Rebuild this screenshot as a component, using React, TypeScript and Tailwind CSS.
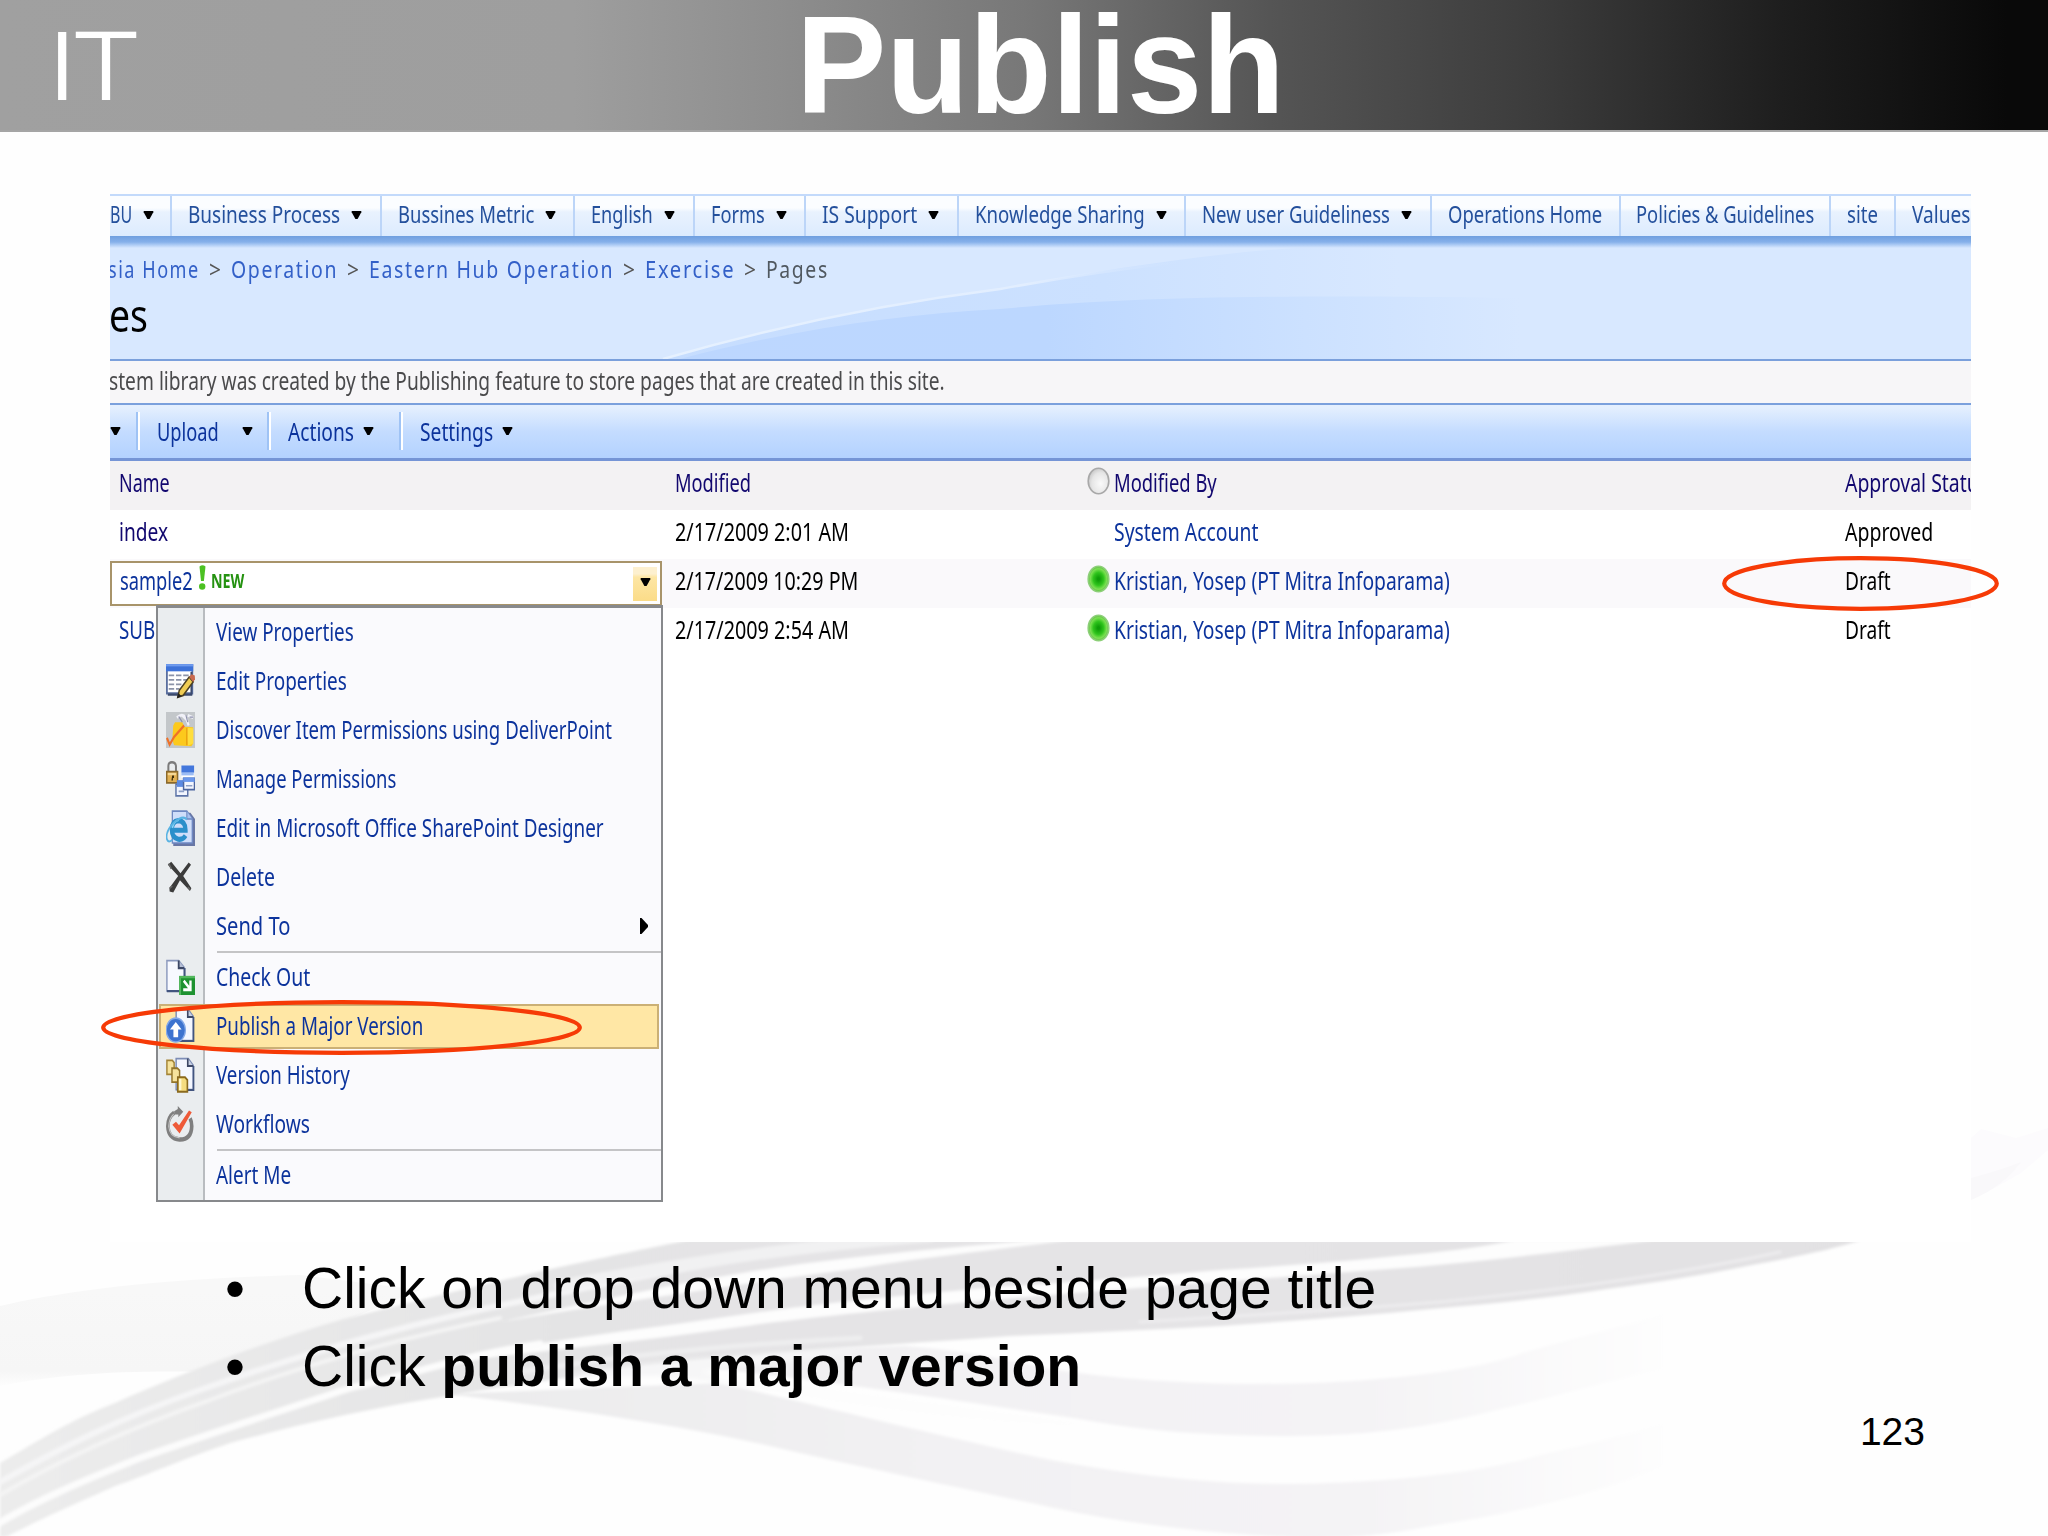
import React, { useLayoutEffect, useRef, useState } from 'react';

interface FitProps {
  w: number;
  className?: string;
  children: React.ReactNode;
}

// Condenses a line of text horizontally until it is exactly `w` pixels wide
const Fit: React.FC<FitProps> = ({ w, className = '', children }) => {
  const ref = useRef<HTMLSpanElement>(null);
  const [scale, setScale] = useState(1);

  useLayoutEffect(() => {
    if (ref.current) setScale(w / ref.current.offsetWidth);
  }, [w]);

  return (
    <span className={`block shrink-0 ${className}`} style={{ width: w }}>
      <span
        ref={ref}
        className="inline-block origin-left whitespace-nowrap"
        style={{ transform: `scaleX(${scale})` }}
      >
        {children}
      </span>
    </span>
  );
};

const Arrow = ({ className = '' }: { className?: string }) => (
  <svg className={`h-[8px] w-[11px] shrink-0 ${className}`} viewBox="0 0 11 8" preserveAspectRatio="none">
    <path d="M.7 0h9.600v1.300L6.600 8H4.400L.7 1.300z" fill="#000" />
  </svg>
);

const TABS = [
  { label: 'BU', w: 22, box: 'w-[62px] pl-0', arrow: true },
  { label: 'Business Process', w: 152, box: 'w-[210px] pl-[16px]', arrow: true },
  { label: 'Bussines Metric', w: 136, box: 'w-[193px] pl-[16px]', arrow: true },
  { label: 'English', w: 62, box: 'w-[120px] pl-[16px]', arrow: true },
  { label: 'Forms', w: 54, box: 'w-[111px] pl-[16px]', arrow: true },
  { label: 'IS Support', w: 95, box: 'w-[153px] pl-[16px]', arrow: true },
  { label: 'Knowledge Sharing', w: 170, box: 'w-[227px] pl-[16px]', arrow: true },
  { label: 'New user Guideliness', w: 188, box: 'w-[246px] pl-[16px]', arrow: true },
  { label: 'Operations Home', w: 154, box: 'w-[189px] pl-[16px]', arrow: false },
  { label: 'Policies & Guidelines', w: 178, box: 'w-[210px] pl-[15px]', arrow: false },
  { label: 'site', w: 31, box: 'w-[65px] pl-[16px]', arrow: false },
  { label: 'Values', w: 58, box: 'w-[80px] pl-[16px]', arrow: false },
];

const CRUMBS = [
  { label: 'sia Home', w: 92 },
  { label: 'Operation', w: 107 },
  { label: 'Eastern Hub Operation', w: 245 },
  { label: 'Exercise', w: 90 },
];

const TabBar = () => (
  <div className="flex h-[42px] border-t-2 border-[#c3dafb] text-[24px] leading-[36px] text-[#24509c]">
    {TABS.map((tab) => (
      <div
        key={tab.label}
        className={`flex shrink-0 border-r-2 border-[#bcd5f8] bg-linear-to-b from-[#fbfdff] from-30% via-[#e9f2fe] via-40% to-[#dcebfe] ${tab.box}`}
      >
        <Fit w={tab.w}>{tab.label}</Fit>
        {tab.arrow && <Arrow className="mt-[15px] ml-[11px]" />}
      </div>
    ))}
  </div>
);

const TitleArea = () => (
  <div className="relative h-[123px] overflow-hidden bg-[#d8e8ff]">
    <svg className="absolute inset-0 h-full w-full" viewBox="110 236 1861 123" preserveAspectRatio="none">
      <defs>
        <linearGradient id="wave" gradientUnits="userSpaceOnUse" x1="660" y1="0" x2="1520" y2="0">
          <stop offset="0" stopColor="#bdd7ff" />
          <stop offset="0.45" stopColor="#bcd7ff" />
          <stop offset="0.75" stopColor="#cce1ff" />
          <stop offset="1" stopColor="#d8e8ff" />
        </linearGradient>
        <linearGradient id="crest" gradientUnits="userSpaceOnUse" x1="660" y1="0" x2="1400" y2="0">
          <stop offset="0" stopColor="#c6ddff" />
          <stop offset="0.6" stopColor="#cce1ff" />
          <stop offset="1" stopColor="#d8e8ff" />
        </linearGradient>
        <linearGradient id="edge" gradientUnits="userSpaceOnUse" x1="660" y1="0" x2="1180" y2="0">
          <stop offset="0" stopColor="#e6f1ff" />
          <stop offset="0.7" stopColor="#e2eeff" />
          <stop offset="1" stopColor="#d8e8ff" stopOpacity="0" />
        </linearGradient>
      </defs>
      <path d="M663 359C780 325 890 303 1000 289C1110 269 1210 252 1330 246H1520V359z" fill="url(#crest)" />
      <path d="M680 359C790 330 900 314 1000 309C1120 298 1250 294 1520 298V359z" fill="url(#wave)" />
      <path d="M663 359C780 325 890 303 1000 289C1060 278 1120 269 1180 262" fill="none" stroke="url(#edge)" strokeWidth="2.500" />
    </svg>
    <div className="relative h-[12px] bg-linear-to-b from-[#6f9fdf] via-[#86b0ea] to-[#d8e8ff]" />
    <div className="relative flex h-[44px] gap-[8.500px] text-[24px] leading-[42px] tracking-[2px] text-[#3360c8]">
      {CRUMBS.map((crumb, i) => (
        <React.Fragment key={crumb.label}>
          <Fit w={crumb.w} className={i === 0 ? '-ml-[2px]' : ''}>{crumb.label}</Fit>
          <Fit w={14} className="text-[#555]">&gt;</Fit>
        </React.Fragment>
      ))}
      <Fit w={63} className="text-[#505860]">Pages</Fit>
    </div>
    <div className="relative text-[45px] leading-[46px] text-black">
      <Fit w={39} className="-ml-[1px]">es</Fit>
    </div>
  </div>
);

const ToolDivider = ({ className }: { className: string }) => (
  <div className={`mt-[7px] h-[38px] w-[4px] shrink-0 border-r-2 border-l-2 border-r-white border-l-[#9fc3f5] ${className}`} />
);

const Toolbar = () => (
  <div className="flex h-[56px] border-b-[3px] border-[#7595d6] bg-linear-to-b from-[#e4effe] from-5% via-[#c4dcff] via-50% to-[#b3d2ff] text-[25px] leading-[53px] text-[#0c339c] shadow-[0_2px_2px_#c8ccd4]">
    <Arrow className="mt-[22px]" />
    <ToolDivider className="ml-[15px]" />
    <Fit w={62} className="ml-[17px]">Upload</Fit>
    <Arrow className="mt-[22px] ml-[23px]" />
    <ToolDivider className="ml-[14px]" />
    <Fit w={66} className="ml-[17px]">Actions</Fit>
    <Arrow className="mt-[22px] ml-[9px]" />
    <ToolDivider className="ml-[25px]" />
    <Fit w={73} className="ml-[17px]">Settings</Fit>
    <Arrow className="mt-[22px] ml-[9px]" />
  </div>
);

const Presence = ({ online }: { online: boolean }) => (
  <svg className="mt-[6px] h-[28px] w-[23px]" viewBox="0 0 23 28">
    <defs>
      <radialGradient id="online" cx="0.5" cy="0.5" r="0.5">
        <stop offset="0.1" stopColor="#0f9d08" />
        <stop offset="0.5" stopColor="#2fc41c" />
        <stop offset="0.8" stopColor="#7be052" />
        <stop offset="1" stopColor="#62b84a" />
      </radialGradient>
      <radialGradient id="offline" cx="0.6" cy="0.6" r="0.6">
        <stop offset="0" stopColor="#fafafa" />
        <stop offset="0.7" stopColor="#e6e6e6" />
        <stop offset="1" stopColor="#cccccc" />
      </radialGradient>
    </defs>
    <ellipse
      cx="11.5"
      cy="14"
      rx="10.3"
      ry="12.8"
      fill={online ? 'url(#online)' : 'url(#offline)'}
      stroke={online ? '#8ccf78' : '#a8a8a8'}
      strokeWidth="1.6"
    />
  </svg>
);

interface RowProps {
  name: React.ReactNode;
  date: string;
  dateW: number;
  by: string;
  byW: number;
  status: string;
  statusW: number;
  presence?: 'online' | 'offline';
  className: string;
  linkClass: string;
}

const Row: React.FC<RowProps> = ({ name, date, dateW, by, byW, status, statusW, presence, className, linkClass }) => (
  <div className={`flex h-[49px] text-[25px] leading-[43px] ${className}`}>
    <div className="w-[565px] shrink-0">{name}</div>
    <div className="w-[412px] shrink-0"><Fit w={dateW}>{date}</Fit></div>
    <div className="w-[27px] shrink-0">{presence && <Presence online={presence === 'online'} />}</div>
    <div className={`w-[731px] shrink-0 ${linkClass}`}><Fit w={byW}>{by}</Fit></div>
    <Fit w={statusW}>{status}</Fit>
  </div>
);

const EditedCell = () => (
  <div className="relative top-[2px] flex h-[45px] w-[552px] border-2 border-[#a8946a] bg-white pl-[8px] text-[#0c339c]">
    <Fit w={73} className="-mt-[4px]">sample2</Fit>
    <svg className="mt-[2px] ml-[5px] h-[25px] w-[8px]" viewBox="0 0 8 25">
      <path d="M1.500 1.500Q4.500 -1 7.500 1.500L5.900 16H3z" fill="#4cc122" />
      <ellipse cx="4.200" cy="21.500" rx="3.200" ry="3.200" fill="#4cc122" />
    </svg>
    <Fit w={33} className="ml-[5px] text-[19px] leading-[36px] font-bold text-[#259211]">NEW</Fit>
    <div className="mt-[4px] mr-[3px] ml-auto flex h-[34px] w-[24px] justify-center bg-linear-to-b from-[#fdf0cf] from-20% via-[#fde6a4] via-30% to-[#fbdc88]">
      <Arrow className="mt-[11px] w-[10px]" />
    </div>
  </div>
);

const Icon = ({ children }: { children: React.ReactNode }) => (
  <svg className="h-[36px] w-[29px]" viewBox="0 0 16 16" preserveAspectRatio="none">{children}</svg>
);

const EditIcon = () => (
  <Icon>
    <path d="M.5 1h14v12.500H.5z" fill="#fff" stroke="#5a6f9f" />
    <path d="M0 .5h15v3.200H0z" fill="#3d72d8" />
    <path d="M0 .5h15v1H0z" fill="#6f9bee" />
    <path d="M1.500 5.500h3m1 0h3m1 0h3M1.500 7.500h3m1 0h3m1 0h3M1.500 9.500h3m1 0h3M1.500 11.500h3m1 0h2" stroke="#8b93a8" strokeWidth=".8" />
    <path d="M14 4v10H1" fill="none" stroke="#3b4a6d" />
    <path d="M6.500 15.200l.8-3 5.500-6 2.200 2.200-5.500 6z" fill="#f0cd54" stroke="#4c4023" strokeWidth=".8" />
    <path d="M12.800 6.200l1.200-1.200 1.900.6.100 1.600-1 1.200z" fill="#c9694e" />
    <path d="M6 15.700l.9-2.400 1.600 1.500z" fill="#222" />
  </Icon>
);

const DiscoverIcon = () => (
  <Icon>
    <path d="M0 0h16v16H0z" fill="#c3c7ca" />
    <path d="M4 6l1-1.500h4L10 6.500l5 .3V14l-1 1.200-9.500-.4-1-2.300z" fill="#fcc91c" />
    <path d="M11 7l4 .2V14l-3 1z" fill="#ffde3c" />
    <path d="M11.500 14.800V7" stroke="#e89a0c" strokeWidth=".7" />
    <path d="M6 2.500Q9 .2 11 2.500L12.500 6M9 1.500l3 2.500m0-2.500l3 1" fill="none" stroke="#f1f1f8" strokeWidth="1.200" />
    <path d="M7 2l2 2.500m2-3l1 3m1-2.200h2" stroke="#8e91ad" strokeWidth=".6" />
    <path d="M.5 11.500l1.500 3L4.500 11 10 6" fill="none" stroke="#ef7128" strokeWidth="1.100" />
  </Icon>
);

const PermissionsIcon = () => (
  <Icon>
    <path d="M1.300 5V2.200Q1.300.6 3.300.6T5.500 2.200V5" fill="none" stroke="#7b7b7b" strokeWidth="1.100" />
    <path d="M.4 4.700h6v5H.4z" fill="#e1b052" stroke="#8a692c" strokeWidth=".8" />
    <path d="M1 5.300h4.500v1H1z" fill="#f5d794" />
    <path d="M3.400 6.400h1v1.100h-.6v1.200h-.8z" fill="#3c2c08" />
    <path d="M8.500 2.500h7v5h-7z" fill="#fff" />
    <path d="M8.500 2h7v3.200h-7z" fill="#4377dc" />
    <path d="M8.500 5.200h6.800v1.200H8.500z" fill="#9bbcf5" />
    <path d="M5.500 10.300h6.500v5.200H5.500z" fill="#f3f6fe" stroke="#5d74a8" strokeWidth=".8" />
    <path d="M6 8.500h4v3H6z" fill="#5b8ae2" />
    <path d="M9.700 7.700h6v5h-6z" fill="#f3f6fe" stroke="#4d669f" strokeWidth=".8" />
    <path d="M9.500 7.300h6.300v2H9.500z" fill="#6b98ec" />
    <path d="M11 11h3.500M7 13.500h3" stroke="#8da0c8" strokeWidth=".7" />
  </Icon>
);

const DesignerIcon = () => (
  <Icon>
    <path d="M4 1.200h9.500l2.500 2.800v12H4z" fill="#6877a5" />
    <path d="M3.500.5h8L14.500 4v10.700h-11z" fill="#cfdefa" stroke="#6e88c2" strokeWidth=".7" />
    <path d="M11.500.5V4h3" fill="#a9c2ee" stroke="#6e88c2" strokeWidth=".6" />
    <path d="M10.800 11.400Q9.500 13.300 6.800 13 3.200 12.300 3.200 8.700 3.200 5 6.800 4.700q4 .2 4 4.300H3.800" fill="none" stroke="#2a8fcb" strokeWidth="2.300" />
    <path d="M3.500 8Q4.200 5 7 4.500" fill="none" stroke="#87d5f6" strokeWidth=".9" />
    <path d="M11.500 4.300Q9.500 2 4.500 5.500-.5 9.500.5 13q.8 1.800 3 .2" fill="none" stroke="#59b3e3" strokeWidth=".9" />
  </Icon>
);

const DeleteIcon = () => (
  <Icon>
    <path d="M1 2.500l1.900-1.300L8 6.300l4.500-4.700 1.300.9-4.300 5L14 13l-.8 1.200-5.500-4.800-3.700 5.500-2-.5-.1-1.500 4.800-5.400z" fill="#3b3b3b" />
    <path d="M1.500 2l1.400 2.300M2 13l1.500-1M12 12.500l1.300 1" stroke="#666" strokeWidth=".8" />
  </Icon>
);

const Page = () => (
  <>
    <path d="M5.600.7h6.700l2.700 3v10.800H5.600z" fill="#f4f7ff" stroke="#7d8db5" strokeWidth=".8" />
    <path d="M12 .7V4h3" fill="#c7d0e4" stroke="#3d4866" strokeWidth=".9" />
    <path d="M15.200 4v10.700H6" fill="none" stroke="#42557f" strokeWidth=".9" />
  </>
);

const CheckOutIcon = () => (
  <Icon>
    <path d="M.5.700h6.500l3 3v10.500H.5z" fill="#f7f9ff" stroke="#8b99bd" strokeWidth=".8" />
    <path d="M7 .7V4h3" fill="#b7c0d6" stroke="#3d4866" strokeWidth="1" />
    <path d="M10.300 4v4M.5 14.300h7" stroke="#42557f" strokeWidth="1" />
    <path d="M7.300 7.500H16V16H7.300z" fill="#1e9230" />
    <path d="M7.300 7.500H16V8.500H8.300V16h-1z" fill="#53b85d" />
    <path d="M9.800 9.700l3.200 3.300M13.500 9.500v4.200H9.500" fill="none" stroke="#fff" strokeWidth="1.300" />
  </Icon>
);

const PublishIcon = () => (
  <Icon>
    <Page />
    <circle cx="5.400" cy="9.800" r="5.300" fill="#3d73cf" stroke="#84a9e8" strokeWidth=".7" />
    <path d="M5.400 6.200L8.600 9.500H6.700v3.500H4.100V9.500H2.200z" fill="#fff" />
  </Icon>
);

const VersionIcon = () => (
  <Icon>
    <Page />
    <path d="M.5 1.500h3l1 1v5.200h-4z" fill="#f6e39c" stroke="#a38436" strokeWidth=".8" />
    <path d="M3.300 5h3l1.200 1v5.200H3.300z" fill="#f6e39c" stroke="#92742a" strokeWidth=".8" />
    <path d="M6.500 9h4l1.300 1.200v5.200H6.500z" fill="#f5dc80" stroke="#8a6a1e" strokeWidth=".9" />
    <path d="M7.200 9.700h1.300v5H7.200z" fill="#fff6cf" />
  </Icon>
);

const WorkflowIcon = () => (
  <Icon>
    <path d="M4.500 3Q1 5 1 9q.3 5.600 6.500 5.900Q14 15 14.200 9q0-2-.9-3.500" fill="none" stroke="#7f7f7f" strokeWidth="2" />
    <path d="M4.200 3.700Q1.700 5.500 1.500 9q.5 4.800 6 5.200" fill="none" stroke="#c6c6c6" strokeWidth=".6" />
    <path d="M4.500 2.300L6.500 1.300V0L9.500 2.500 6.800 5V3.800H4.500z" fill="#808080" />
    <path d="M3.500 8.300l2-1.300L7.200 8.500 12.700 2l1.500.8-6.700 9.400z" fill="#ee5a38" />
  </Icon>
);

interface MenuItemProps {
  label: string;
  w: number;
  icon?: React.ReactNode;
  active?: boolean;
  submenu?: boolean;
}

const MenuItem: React.FC<MenuItemProps> = ({ label, w, icon, active, submenu }) => (
  <div className="h-[49px] py-[2px] pr-[2px] pl-[1px]">
    <div
      className={`flex h-[45px] items-center border-2 pb-[1px] ${active ? 'border-[#cbb076] bg-[#ffe7a5]' : 'border-transparent'}`}
    >
      <div className="ml-[5px] w-[50px] shrink-0">{icon}</div>
      <Fit w={w} className="-mt-[2px]">{label}</Fit>
      {submenu && (
        <svg className="mr-[9px] ml-auto h-[16px] w-[8px]" viewBox="0 0 8 16">
          <path d="M0 0h1.500L8 7v2L1.500 16H0z" />
        </svg>
      )}
    </div>
  </div>
);

const Separator = () => <div className="ml-[59px] h-[2px] bg-[#c4c4c6]" />;

const ContextMenu = () => (
  <div className="absolute top-[411px] left-[46px] h-[597px] w-[507px] border-2 border-t-[3px] border-[#87898c] bg-[linear-gradient(90deg,#eaedef_45px,#b9bcc0_45px,#b9bcc0_47px,#fafafd_47px)] text-[25px] leading-[42px] text-[#0c339c]">
    <MenuItem label="View Properties" w={138} />
    <MenuItem label="Edit Properties" w={131} icon={<EditIcon />} />
    <MenuItem label="Discover Item Permissions using DeliverPoint" w={396} icon={<DiscoverIcon />} />
    <MenuItem label="Manage Permissions" w={180} icon={<PermissionsIcon />} />
    <MenuItem label="Edit in Microsoft Office SharePoint Designer" w={388} icon={<DesignerIcon />} />
    <MenuItem label="Delete" w={59} icon={<DeleteIcon />} />
    <MenuItem label="Send To" w={74} submenu />
    <Separator />
    <MenuItem label="Check Out" w={94} icon={<CheckOutIcon />} />
    <MenuItem label="Publish a Major Version" w={207} icon={<PublishIcon />} active />
    <MenuItem label="Version History" w={134} icon={<VersionIcon />} />
    <MenuItem label="Workflows" w={94} icon={<WorkflowIcon />} />
    <Separator />
    <MenuItem label="Alert Me" w={75} />
  </div>
);

const SharePointPage = () => (
  <div className="relative ml-[110px] h-[1048px] w-[1861px] overflow-hidden bg-white font-['Noto_Sans',sans-serif]">
    <TabBar />
    <TitleArea />
    <div className="h-[46px] border-t-2 border-b-2 border-[#7ba0dc] bg-[#f7f6f8] text-[25px] leading-[39px] text-[#4a4a4c]">
      <Fit w={836} className="-ml-[1px]">
        stem library was created by the Publishing feature to store pages that are created in this site.
      </Fit>
    </div>
    <Toolbar />
    <Row
      name={<Fit w={51} className="ml-[9px]">Name</Fit>}
      date="Modified"
      dateW={76}
      by="Modified By"
      byW={103}
      status="Approval Status"
      statusW={143}
      presence="offline"
      className="bg-[#f3f2f3] text-[#12086f]"
      linkClass=""
    />
    <Row
      name={<Fit w={49} className="ml-[9px] text-[#12086f]">index</Fit>}
      date="2/17/2009 2:01 AM"
      dateW={174}
      by="System Account"
      byW={144}
      status="Approved"
      statusW={88}
      className="bg-white"
      linkClass="text-[#0c339c]"
    />
    <Row
      name={<EditedCell />}
      date="2/17/2009 10:29 PM"
      dateW={183}
      by="Kristian, Yosep (PT Mitra Infoparama)"
      byW={336}
      status="Draft"
      statusW={46}
      presence="online"
      className="bg-[#faf9fb]"
      linkClass="text-[#0c339c]"
    />
    <Row
      name={<Fit w={36} className="ml-[9px] text-[#0c339c]">SUB</Fit>}
      date="2/17/2009 2:54 AM"
      dateW={174}
      by="Kristian, Yosep (PT Mitra Infoparama)"
      byW={336}
      status="Draft"
      statusW={46}
      presence="online"
      className="bg-white"
      linkClass="text-[#0c339c]"
    />
    <ContextMenu />
  </div>
);

const Swooshes = () => (
  <svg className="absolute top-[1242px] left-0 h-[294px] w-full" viewBox="0 1242 2048 294" preserveAspectRatio="none">
    <defs>
      <linearGradient id="fadeRight" gradientUnits="userSpaceOnUse" x1="450" y1="0" x2="1680" y2="0">
        <stop offset="0" stopColor="#ebebec" />
        <stop offset="0.4" stopColor="#f2f1f3" />
        <stop offset="0.75" stopColor="#f4f3f5" />
        <stop offset="1" stopColor="#fefefe" />
      </linearGradient>
      <linearGradient id="ribbon" gradientUnits="userSpaceOnUse" x1="0" y1="0" x2="1860" y2="0">
        <stop offset="0" stopColor="#ececec" />
        <stop offset="0.3" stopColor="#e4e4e5" />
        <stop offset="0.6" stopColor="#e5e4e6" />
        <stop offset="1" stopColor="#e2e1e3" />
      </linearGradient>
      <linearGradient id="leftBand" gradientUnits="userSpaceOnUse" x1="0" y1="1290" x2="0" y2="1385">
        <stop offset="0" stopColor="#f8f8f8" />
        <stop offset="0.85" stopColor="#f6f6f6" />
        <stop offset="1" stopColor="#fdfdfd" />
      </linearGradient>
      <filter id="soft" x="-5%" y="-20%" width="110%" height="140%">
        <feGaussianBlur stdDeviation="1.6" />
      </filter>
      <filter id="softer" x="-5%" y="-20%" width="110%" height="140%">
        <feGaussianBlur stdDeviation="2.5" />
      </filter>
    </defs>
    <path d="M0 1306C60 1292 150 1279 300 1275L420 1290L220 1372C120 1370 60 1374 0 1386z" fill="url(#leftBand)" />

    {/* pale loops below the ribbon */}
    <g filter="url(#soft)" fill="url(#fadeRight)">
      <path d="M720 1352L905 1346C960 1350 1000 1358 1045 1368C1110 1379 1190 1384 1256 1384C1370 1384 1470 1372 1520 1354C1580 1336 1620 1328 1663 1314V1369C1610 1380 1550 1398 1501 1409C1430 1428 1360 1436 1291 1436C1200 1436 1140 1430 1080 1419C950 1400 860 1385 717 1369z" />
      <path d="M448 1394L717 1383C790 1398 890 1424 975 1443C1060 1464 1170 1484 1291 1484C1400 1482 1480 1472 1537 1456C1590 1444 1620 1436 1663 1424V1466C1600 1494 1510 1514 1431 1526C1380 1536 1330 1540 1290 1537C1180 1532 1100 1518 1045 1506C950 1486 850 1464 800 1453C700 1428 580 1410 448 1394z" />
    </g>

    {/* main ribbon */}
    <path
      d="M0 1463C40 1440 70 1420 115 1403C190 1370 270 1340 344 1319C420 1300 500 1280 574 1264C620 1254 650 1248 689 1240H1861C1830 1250 1800 1256 1747 1266C1700 1276 1650 1283 1607 1289C1550 1298 1490 1304 1431 1309C1360 1316 1290 1321 1221 1326C1150 1330 1080 1333 1010 1336C930 1342 860 1346 800 1351C680 1362 550 1378 448 1396C370 1408 300 1424 230 1443C180 1460 150 1474 115 1486C80 1502 50 1514 6 1537H0z"
      fill="url(#ribbon)"
      filter="url(#soft)"
    />
    <g fill="#fdfdfd" filter="url(#soft)">
      <path d="M1515 1240C1480 1248 1440 1252 1396 1256C1340 1262 1280 1266 1220 1270C1140 1277 1060 1283 1010 1286C900 1295 800 1306 746 1314C640 1330 540 1340 442 1362C560 1350 680 1336 760 1324C860 1312 980 1300 1150 1287C1240 1280 1300 1276 1360 1271C1440 1266 1530 1256 1655 1240z" />
      <path d="M1040 1240C960 1246 880 1254 800 1264C700 1278 600 1300 500 1322C620 1302 740 1284 860 1268C920 1258 980 1252 1070 1240z" />
    </g>
    <g fill="none" strokeLinecap="round" filter="url(#soft)">
      <path d="M-6 1526C40 1498 90 1478 140 1458C220 1430 290 1408 350 1388C420 1372 480 1352 540 1344" stroke="#fcfcfc" strokeWidth="7" />
      <path d="M0 1482C60 1448 120 1418 200 1390C290 1358 380 1332 470 1312C600 1284 700 1264 800 1250" stroke="#f5f5f6" strokeWidth="6" />
      <path d="M0 1495C60 1460 130 1428 210 1400C300 1366 400 1338 500 1318" stroke="#f4f4f4" strokeWidth="4" />
      <path d="M930 1236C800 1246 690 1262 560 1286" stroke="#f1f1f2" strokeWidth="12" />
      <path d="M520 1372C620 1356 740 1344 860 1338" stroke="#eeeeef" strokeWidth="5" />
      <path d="M1780 1252C1680 1274 1560 1290 1440 1302C1340 1310 1240 1316 1140 1322" stroke="#efeef0" strokeWidth="2.500" />
    </g>
    <path d="M560 1376C640 1362 740 1354 860 1350C800 1362 740 1366 700 1372C760 1384 880 1402 960 1412C840 1394 740 1384 660 1376z" fill="#f6f6f7" filter="url(#softer)" />
    <path d="M717 1372C820 1390 940 1404 1080 1424C1000 1424 860 1408 717 1380z" fill="#fdfdfd" filter="url(#soft)" />
  </svg>
);

const Callout = ({ className, w, h }: { className: string; w: number; h: number }) => (
  <svg className={`absolute ${className}`} width={w} height={h}>
    <ellipse cx={w / 2} cy={h / 2} rx={w / 2 - 2.2} ry={h / 2 - 2.2} fill="none" stroke="#f63a06" strokeWidth="4.2" />
  </svg>
);

export default function App() {
  return (
    <div className="relative h-[1536px] w-[2048px] overflow-hidden bg-[#fefefe] font-['Liberation_Sans',Arial,sans-serif] text-black">
      <Swooshes />
      <svg className="absolute top-[1020px] left-[1971px] h-[190px] w-[77px]" viewBox="0 0 77 190">
        <path d="M0 118L10 109Q30 114 45 118L77 108V130L50 153Q25 168 0 180z" fill="#fcfbfd" />
        <path d="M0 158Q30 150 50 142Q30 168 0 180z" fill="#f9f8fa" />
      </svg>

      <header className="relative flex h-[132px] border-b-2 border-[#a5a5a5] bg-[linear-gradient(90deg,#a0a0a0_0%,#9e9e9e_28%,#8e8e8e_38%,#787878_50%,#555_62%,#3c3c3c_75%,#1e1e1e_87%,#090909_98%)]">
        <div className="w-[796px] shrink-0 pl-[48px] font-['Open_Sans',sans-serif] text-[92px] leading-[128px] font-light text-white [-webkit-text-stroke:2px_white]">
          <Fit w={87}>IT</Fit>
        </div>
        <h1 className="text-[139px] leading-[130px] font-bold text-white">
          <Fit w={489}>Publish</Fit>
        </h1>
      </header>

      <main className="relative pt-[62px]">
        <SharePointPage />

        <ul className="mt-[7px] text-[57px] leading-[78px]">
          <li className="flex pl-[225px]">
            <span className="w-[77px]">•</span>
            <Fit w={1074}>Click on drop down menu beside page title</Fit>
          </li>
          <li className="flex pl-[225px]">
            <span className="w-[77px]">•</span>
            <Fit w={779}>Click <b>publish a major version</b></Fit>
          </li>
        </ul>
        <p className="mt-[4px] pr-[123px] text-right text-[39px] leading-[46px]">123</p>

        {/* red callouts drawn over the page */}
        <Callout className="top-[424px] left-[1722px]" w={277} h={55} />
        <Callout className="top-[868px] left-[101px]" w={481} h={55} />
      </main>
    </div>
  );
}
